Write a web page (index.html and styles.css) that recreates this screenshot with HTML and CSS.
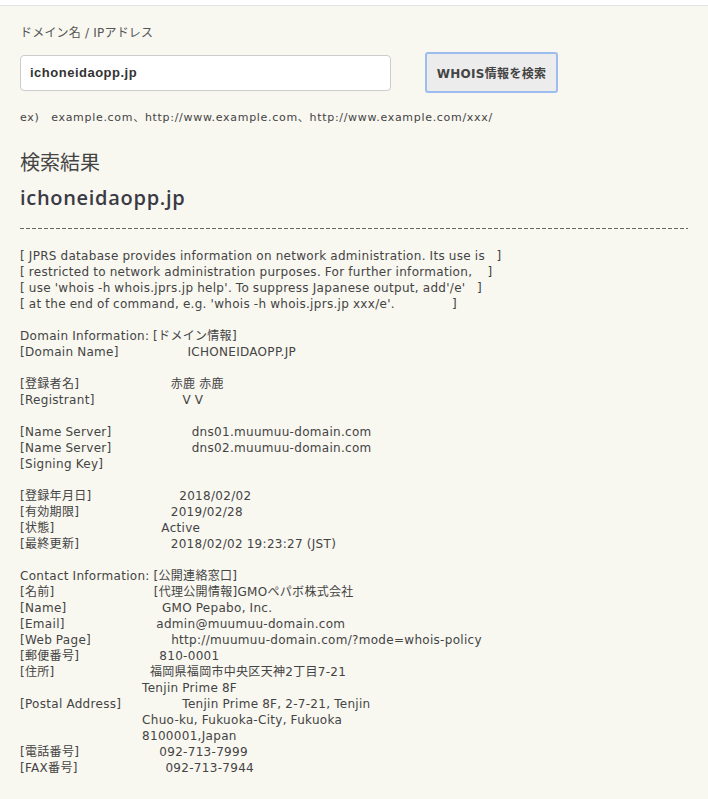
FILE: index.html
```html
<!DOCTYPE html>
<html lang="ja">

<head>
    <meta charset="UTF-8">
    <meta name="viewport" content="width=device-width, initial-scale=1.0">
    <title>WHOIS検索</title>
    <link rel="stylesheet" href="styles.css">
</head>

<body>
    <div class="whois-page">
        <form class="search-form" onsubmit="return false">
            <label class="field-label" for="domain">ドメイン名 / IPアドレス</label>
            <div class="search-row">
                <input type="text" id="domain" class="domain-input" value="ichoneidaopp.jp">
                <button type="submit" class="search-btn">WHOIS情報を検索</button>
            </div>
            <p class="example">ex)　example.com、http://www.example.com、http://www.example.com/xxx/</p>
        </form>

        <div class="result">
            <h2 class="result-title">検索結果</h2>
            <h3 class="result-domain">ichoneidaopp.jp</h3>
            <div class="dashed-rule"></div>
            <pre class="whois-text">
[ JPRS database provides information on network administration. Its use is   ]
[ restricted to network administration purposes. For further information,    ]
[ use 'whois -h whois.jprs.jp help'. To suppress Japanese output, add'/e'   ]
[ at the end of command, e.g. 'whois -h whois.jprs.jp xxx/e'.               ]

Domain Information: [ドメイン情報]
[Domain Name]                  ICHONEIDAOPP.JP

[登録者名]                        赤鹿 赤鹿
[Registrant]                       V V

[Name Server]                     dns01.muumuu-domain.com
[Name Server]                     dns02.muumuu-domain.com
[Signing Key]

[登録年月日]                       2018/02/02
[有効期限]                        2019/02/28
[状態]                            Active
[最終更新]                        2018/02/02 19:23:27 (JST)

Contact Information: [公開連絡窓口]
[名前]                          [代理公開情報]GMOペパボ株式会社
[Name]                         GMO Pepabo, Inc.
[Email]                        admin@muumuu-domain.com
[Web Page]                     http://muumuu-domain.com/?mode=whois-policy
[郵便番号]                     810-0001
[住所]                         福岡県福岡市中央区天神2丁目7-21
                                Tenjin Prime 8F
[Postal Address]                Tenjin Prime 8F, 2-7-21, Tenjin
                                Chuo-ku, Fukuoka-City, Fukuoka
                                8100001,Japan
[電話番号]                     092-713-7999
[FAX番号]                       092-713-7944
</pre>
        </div>
    </div>
</body>

</html>
```

FILE: styles.css
```css
* {
    margin: 0;
    padding: 0;
    box-sizing: border-box;
}

body {
    background: #fff;
    color: #444;
    font-family: "DejaVu Sans", "Noto Sans CJK JP", sans-serif;
}

.whois-page {
    margin-top: 5px;
    min-height: 794px;
    padding: 19px 20px 30px;
    background: #f8f7f0;
    border-top: 1px solid #e4e4e4;
}

.field-label {
    display: block;
    font-size: 12px;
    line-height: 16px;
    letter-spacing: 0.2px;
    color: #555;
}

.search-row {
    display: flex;
    align-items: center;
    gap: 34px;
    margin-top: 11px;
}

.domain-input {
    width: 371px;
    height: 36px;
    padding: 0 9px;
    background: #fff;
    border: 1px solid #ccc;
    border-radius: 4px;
    font-family: "Liberation Sans", sans-serif;
    font-size: 13px;
    font-weight: bold;
    letter-spacing: 0.5px;
    color: #333;
}

.search-btn {
    width: 133px;
    height: 41px;
    background: #ececec;
    border: 2px solid #9dbdf0;
    border-radius: 3px;
    font-family: "DejaVu Sans", "Noto Sans CJK JP", sans-serif;
    font-size: 12px;
    font-weight: bold;
    letter-spacing: 0.3px;
    color: #444;
    cursor: pointer;
}

.example {
    margin-top: 17px;
    font-size: 11px;
    line-height: 16px;
    letter-spacing: 0.7px;
    color: #444;
}

.result-title {
    margin-top: 23px;
    font-size: 20px;
    line-height: 28px;
    font-weight: normal;
    color: #444;
}

.result-domain {
    margin-top: 7px;
    font-family: "Open Sans", sans-serif;
    font-size: 20px;
    line-height: 28px;
    font-weight: 600;
    letter-spacing: 0.7px;
    color: #3a3a44;
}

.dashed-rule {
    height: 1px;
    margin-top: 16px;
    background: repeating-linear-gradient(to right, #666 0 4px, transparent 4px 6px);
}

.whois-text {
    margin-top: 19px;
    font-family: "DejaVu Sans", "Noto Sans CJK JP", sans-serif;
    font-size: 12px;
    line-height: 16px;
    letter-spacing: 0.3px;
    word-spacing: -0.3px;
    color: #444;
}
```
